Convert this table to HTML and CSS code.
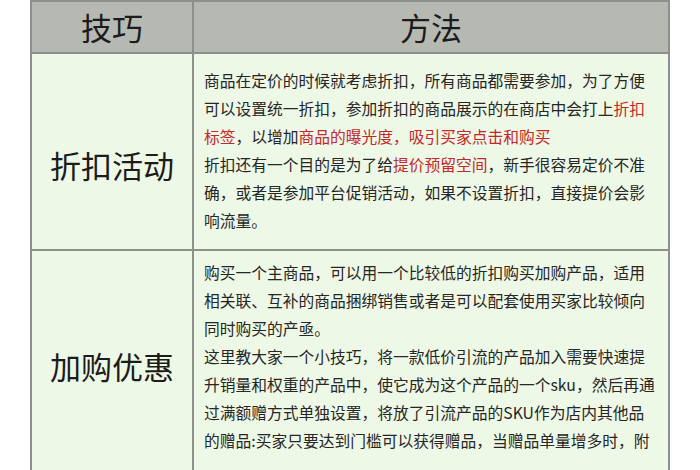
FILE: index.html
```html
<!DOCTYPE html>
<html lang="zh-CN">
<head>
<meta charset="utf-8">
<title>技巧与方法</title>
<link rel="stylesheet" href="styles.css">
</head>
<body>
<table class="tips">
  <thead>
    <tr>
      <th class="col-skill">技巧</th>
      <th class="col-method">方法</th>
    </tr>
  </thead>
  <tbody>
    <tr class="row-first">
      <td class="label">折扣活动</td>
      <td class="method">
        <p>商品在定价的时候就考虑折扣，所有商品都需要参加，为了方便<br>可以设置统一折扣，参加折扣的商品展示的在商店中会打上<span class="hl">折扣<br>标签</span>，以增加<span class="hl">商品的曝光度，吸引买家点击和购买</span></p>
        <p>折扣还有一个目的是为了给<span class="hl">提价预留空间</span>，新手很容易定价不准<br>确，或者是参加平台促销活动，如果不设置折扣，直接提价会影<br>响流量。</p>
      </td>
    </tr>
    <tr class="row-second">
      <td class="label">加购优惠</td>
      <td class="method">
        <p>购买一个主商品，可以用一个比较低的折扣购买加购产品，适用<br>相关联、互补的商品捆绑销售或者是可以配套使用买家比较倾向<br>同时购买的产亟。</p>
        <p>这里教大家一个小技巧，将一款低价引流的产品加入需要快速提<br>升销量和权重的产品中，使它成为这个产品的一个sku，然后再通<br>过满额赠方式单独设置，将放了引流产品的SKU作为店内其他品<br>的赠品:买家只要达到门槛可以获得赠品，当赠品单量增多时，附</p>
      </td>
    </tr>
  </tbody>
</table>
</body>
</html>
```

FILE: styles.css
```css
html, body {
  margin: 0;
  padding: 0;
  background: #ffffff;
}

body {
  font-family: "Noto Sans CJK SC", "Noto Sans", sans-serif;
  color: #222222;
}

.tips {
  margin: 0 0 0 30px;
  width: 640px;
  border-collapse: collapse;
  table-layout: fixed;
}

.tips th,
.tips td {
  border: 2px solid #8d908b;
  padding: 0;
}

.tips thead th {
  background: #b6b9b2;
  height: 50px;
  font-size: 31px;
  font-weight: 400;
  color: #1c1c1c;
  text-align: center;
  vertical-align: middle;
  line-height: 40px;
}

.col-skill {
  width: 160px;
}

.tips tbody td {
  background: #eef8e6;
}

.label {
  vertical-align: top;
  text-align: center;
  font-size: 31px;
  line-height: 40px;
  color: #1c1c1c;
  padding-top: 91px !important;
}

.row-second .label {
  padding-top: 95px !important;
}

.method {
  vertical-align: top;
  font-size: 15.75px;
  line-height: 28px;
  color: #262626;
  padding: 13px 8px 14px 10px !important;
  white-space: nowrap;
}

.row-second .method {
  padding-top: 8px !important;
  padding-bottom: 40px !important;
}

.method p {
  margin: 0;
}

.hl {
  color: #c3282b;
}
```
